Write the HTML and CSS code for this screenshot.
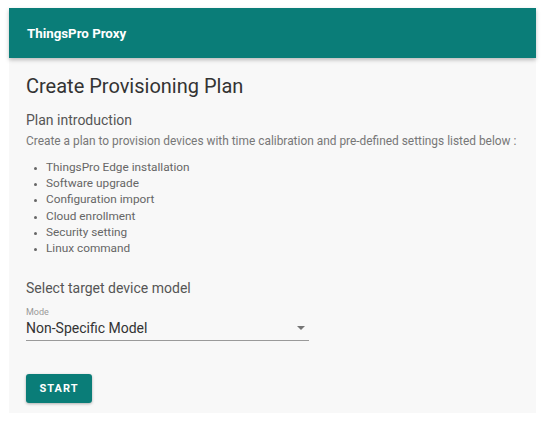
FILE: index.html
```html
<!DOCTYPE html>
<html>
<head>
<meta charset="utf-8">
<link rel="stylesheet" href="styles.css">
</head>
<body>
<div class="panel">
  <header class="bar"><span class="brand">ThingsPro Proxy</span></header>
  <main class="content">
    <h1 class="title">Create Provisioning Plan</h1>
    <h2 class="subtitle">Plan introduction</h2>
    <p class="intro">Create a plan to provision devices with time calibration and pre-defined settings listed below :</p>
    <ul class="list">
      <li>ThingsPro Edge installation</li>
      <li>Software upgrade</li>
      <li>Configuration import</li>
      <li>Cloud enrollment</li>
      <li>Security setting</li>
      <li>Linux command</li>
    </ul>
    <h2 class="subtitle select-title">Select target device model</h2>
    <div class="field">
      <div class="field-label">Mode</div>
      <div class="field-value">
        <span>Non-Specific Model</span>
        <svg class="arrow" width="8" height="4" viewBox="0 0 8 4"><path d="M0 0 L8 0 L4 4 Z" fill="#757575"/></svg>
      </div>
    </div>
    <button class="start">START</button>
  </main>
</div>
</body>
</html>
```
FILE: styles.css
```css
html, body {
  margin: 0;
  padding: 0;
  background: #ffffff;
  font-family: Roboto, "Liberation Sans", sans-serif;
}
.panel {
  margin: 8px 0 0 9px;
  width: 527px;
  height: 405px;
  background: #f8f8f8;
  display: flex;
  flex-direction: column;
}
.bar {
  height: 50px;
  background: #0a7d78;
  display: flex;
  align-items: center;
  padding-left: 18px;
  box-shadow: 0 2px 4px rgba(0,0,0,0.25);
}
.brand {
  color: #ffffff;
  font-size: 13.3px;
  font-weight: 700;
  margin-top: 1px;
}
.content {
  padding: 0 17px;
  display: flex;
  flex-direction: column;
  align-items: flex-start;
}
.title {
  margin: 16px 0 0 0;
  font-size: 20px;
  font-weight: 400;
  color: #333333;
  line-height: 24px;
}
.subtitle {
  margin: 13px 0 0 0;
  font-size: 14px;
  font-weight: 400;
  color: #555555;
  line-height: 18px;
}
.intro {
  margin: 5px 0 0 0;
  font-size: 11.9px;
  color: #777777;
  line-height: 15px;
  white-space: nowrap;
}
.list {
  margin: 10px 0 0 0;
  padding-left: 20px;
  font-size: 11.8px;
  color: #666666;
  line-height: 16.2px;
}
.list li::marker {
  font-size: 9px;
}
.select-title {
  margin-top: 23px;
}
.field {
  margin-top: 8px;
  width: 283px;
}
.field-label {
  font-size: 9px;
  color: #999999;
  line-height: 14px;
}
.field-value {
  display: flex;
  justify-content: space-between;
  align-items: center;
  font-size: 14px;
  color: #333333;
  line-height: 18px;
  padding-bottom: 3px;
  border-bottom: 1px solid #9a9a9a;
}
.arrow {
  margin-right: 4px;
}
.start {
  margin-top: 33px;
  width: 66px;
  height: 29px;
  border: none;
  border-radius: 3px;
  background: #0a7d78;
  color: #ffffff;
  font-family: Roboto, "Liberation Sans", sans-serif;
  font-size: 11px;
  font-weight: 700;
  letter-spacing: 1px;
  box-shadow: 0 1px 3px rgba(0,0,0,0.3);
  padding: 0;
}
```
